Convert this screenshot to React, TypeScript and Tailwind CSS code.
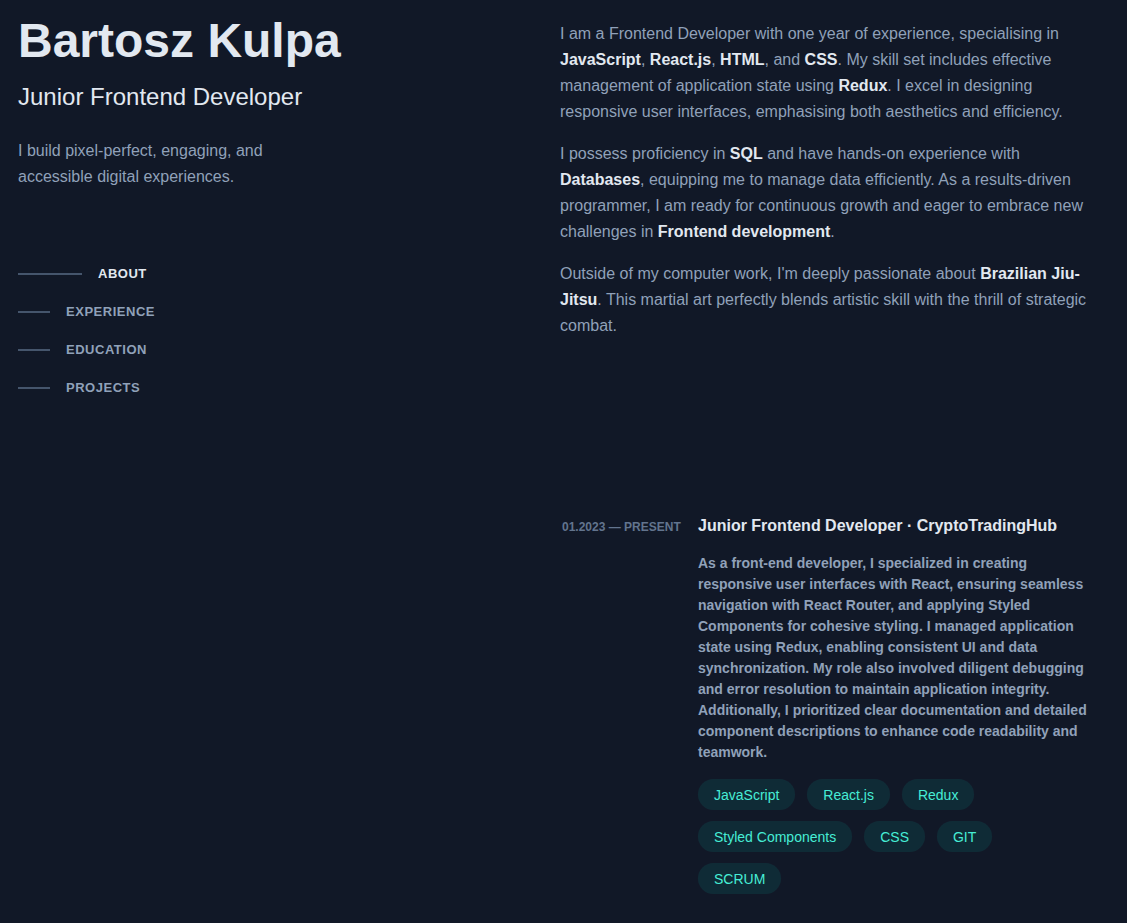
import React from "react";

const navItems = ["About", "Experience", "Education", "Projects"];

const tags = ["JavaScript", "React.js", "Redux", "Styled Components", "CSS", "GIT", "SCRUM"];

const B = ({ children }: { children: React.ReactNode }) => (
  <span className="font-bold text-slate-200">{children}</span>
);

const App = () => {
  return (
    <div className="min-h-screen bg-[#111827] px-[18px] font-['Liberation_Sans',Arial,sans-serif] text-slate-400 flex">
      {/* left header */}
      <header className="w-[542px] shrink-0 pt-[17px]">
        <h1 className="text-5xl leading-none font-bold text-slate-200">Bartosz Kulpa</h1>
        <h2 className="mt-[16px] text-2xl leading-8 text-slate-200">Junior Frontend Developer</h2>
        <p className="mt-[25px] max-w-[280px] text-base leading-[26px]">
          I build pixel-perfect, engaging, and accessible digital experiences.
        </p>
        <nav className="mt-[76px]">
          <ul className="flex flex-col gap-[22px]">
            {navItems.map((item, i) => {
              const active = i === 0;
              return (
                <li key={item} className="flex items-center h-4">
                  <span className={active ? "h-[2px] w-16 bg-slate-600 mr-4" : "h-[2px] w-8 bg-slate-600 mr-4"} />
                  <span
                    className={
                      "text-[13px] font-bold uppercase tracking-[0.04em] " +
                      (active ? "text-slate-200" : "text-slate-400")
                    }
                  >
                    {item}
                  </span>
                </li>
              );
            })}
          </ul>
        </nav>
      </header>

      {/* right content */}
      <main className="flex-1 pt-[21px] pr-[18px]">
        <section className="flex flex-col gap-4 text-base leading-[26px]">
          <p>
            I am a Frontend Developer with one year of experience, specialising in <B>JavaScript</B>,{" "}
            <B>React.js</B>, <B>HTML</B>, and <B>CSS</B>. My skill set includes effective management of
            application state using <B>Redux</B>. I excel in designing responsive user interfaces,
            emphasising both aesthetics and efficiency.
          </p>
          <p>
            I possess proficiency in <B>SQL</B> and have hands-on experience with <B>Databases</B>,
            equipping me to manage data efficiently. As a results-driven programmer, I am ready for
            continuous growth and eager to embrace new challenges in <B>Frontend development</B>.
          </p>
          <p>
            Outside of my computer work, I'm deeply passionate about <B>Brazilian Jiu-Jitsu</B>. This
            martial art perfectly blends artistic skill with the thrill of strategic combat.
          </p>
        </section>

        <section className="mt-[175px]">
          <div className="flex">
            <div className="w-[138px] shrink-0 pl-[2px] pt-[5px] text-xs leading-4 font-bold uppercase text-slate-500">
              01.2023 — Present
            </div>
            <div className="flex-1">
              <h3 className="text-base leading-6 font-bold text-slate-200">
                Junior Frontend Developer · CryptoTradingHub
              </h3>
              <p className="mt-[15px] text-sm leading-[21px] font-bold text-slate-400">
                As a front-end developer, I specialized in creating responsive user interfaces with React,
                ensuring seamless navigation with React Router, and applying Styled Components for cohesive
                styling. I managed application state using Redux, enabling consistent UI and data
                synchronization. My role also involved diligent debugging and error resolution to maintain
                application integrity. Additionally, I prioritized clear documentation and detailed
                component descriptions to enhance code readability and teamwork.
              </p>
              <ul className="mt-[16px] max-w-[380px] flex flex-wrap gap-x-3 gap-y-[11px]">
                {tags.map((t) => (
                  <li
                    key={t}
                    className="h-[31px] flex items-center rounded-full bg-teal-400/10 px-4 text-sm text-teal-300"
                  >
                    {t}
                  </li>
                ))}
              </ul>
            </div>
          </div>
        </section>
      </main>
    </div>
  );
};

export default App;
